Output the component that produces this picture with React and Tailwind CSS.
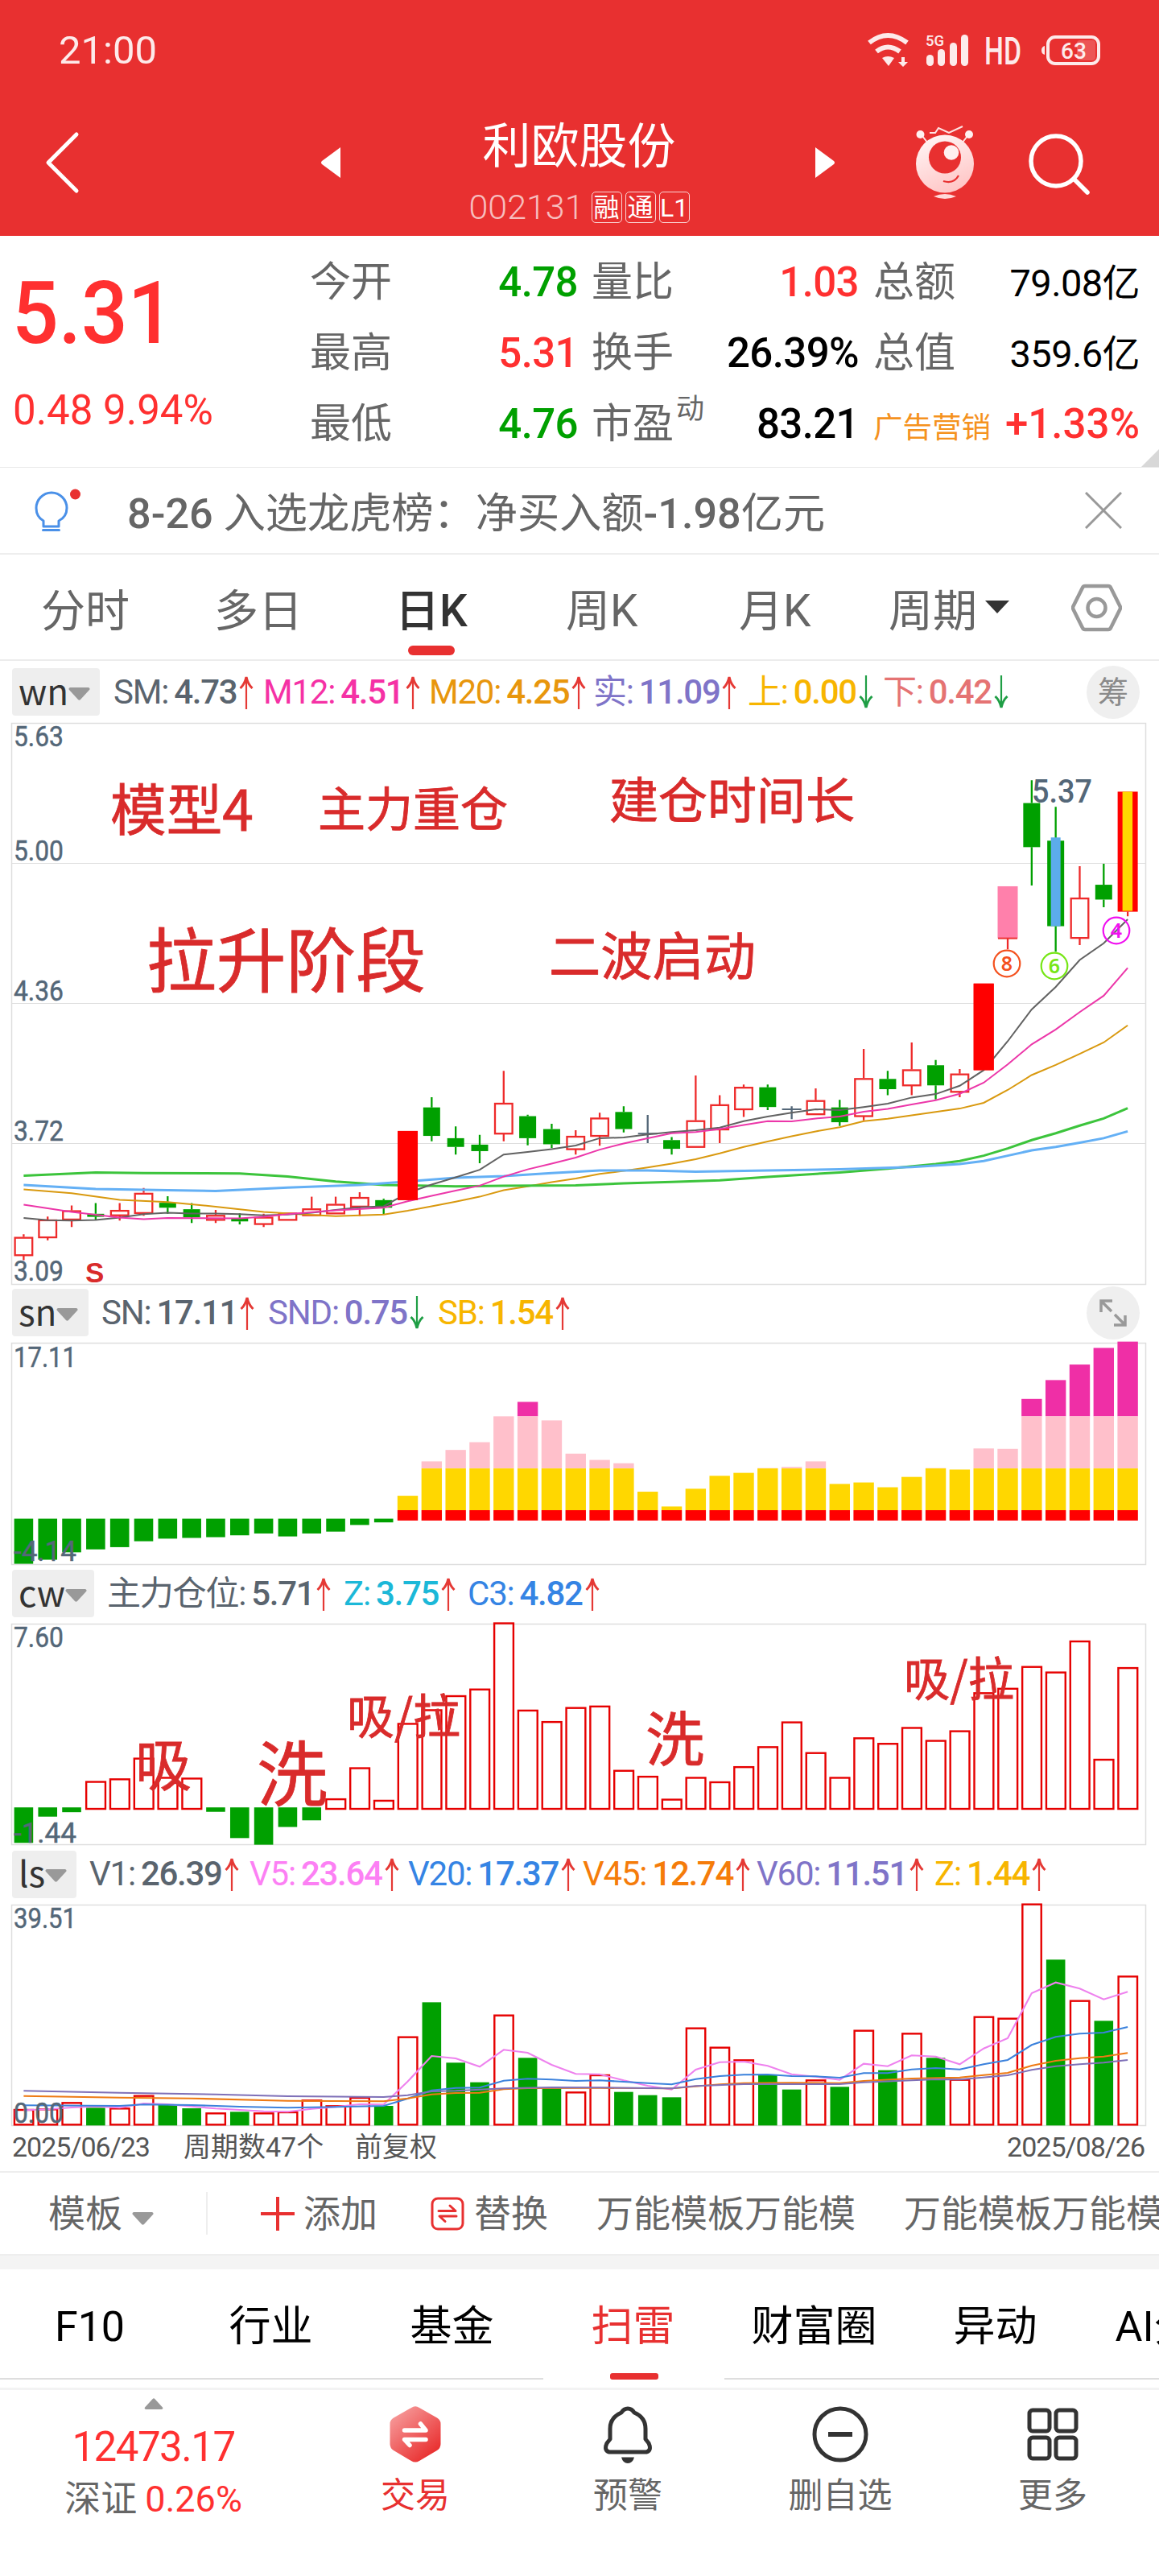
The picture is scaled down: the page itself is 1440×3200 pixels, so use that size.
import React from 'react';

// Shared geometry: 47 bars across the chart width
const STEP = 29.82;
const cx = (i) => 29.4 + i * STEP;

const RED = '#e60000';
const GREEN = '#00a000';
const FONT = 'Roboto, "Noto Sans CJK SC", sans-serif';

// [type, body top, body bottom, high, low] - r hollow, g green, R limit up, p pink, d doji, b blue core, y yellow core
const CANDLES = [
  ['r', 1391, 1439, 1384, 1452], ['r', 1345, 1392, 1337, 1400], ['r', 1321, 1345, 1308, 1365], ['g', 1330, 1338, 1302, 1347],
  ['r', 1320, 1334, 1302, 1348], ['r', 1275, 1328, 1262, 1335], ['g', 1301, 1314, 1284, 1330], ['g', 1318, 1339, 1302, 1354],
  ['r', 1333, 1346, 1320, 1354], ['g', 1341, 1350, 1329, 1358], ['r', 1338, 1357, 1330, 1365], ['r', 1327, 1346, 1327, 1346],
  ['r', 1316, 1334, 1285, 1334], ['r', 1304, 1329, 1285, 1329], ['r', 1286, 1311, 1273, 1336], ['g', 1294, 1314, 1290, 1331],
  ['R', 1112, 1294, 1112, 1294], ['g', 1050, 1125, 1023, 1139], ['g', 1131, 1154, 1100, 1174], ['g', 1148, 1165, 1122, 1197],
  ['r', 1038, 1119, 954, 1139], ['g', 1073, 1131, 1069, 1150], ['g', 1107, 1147, 1093, 1157], ['r', 1125, 1160, 1110, 1174],
  ['r', 1077, 1125, 1064, 1151], ['g', 1062, 1107, 1047, 1116], ['d', 1119, 1119, 1070, 1144], ['g', 1136, 1159, 1128, 1174],
  ['r', 1084, 1154, 966, 1154], ['r', 1042, 1108, 1018, 1144], ['r', 996, 1055, 990, 1075], ['g', 997, 1049, 990, 1057],
  ['d', 1055, 1055, 1047, 1081], ['r', 1031, 1068, 1000, 1068], ['g', 1050, 1089, 1030, 1099], ['r', 973, 1073, 896, 1084],
  ['g', 975, 1002, 954, 1018], ['r', 950, 992, 879, 1018], ['g', 939, 992, 925, 1029], ['r', 961, 1009, 949, 1023],
  ['R', 724, 952, 724, 952], ['p', 468, 605, 468, 634], ['g', 249, 365, 189, 466], ['b', 348, 573, 259, 640],
  ['r', 498, 604, 415, 623], ['g', 464, 503, 409, 523], ['y', 219, 535, 219, 547],
];

// [bar index, value] points of the moving averages
const MA = [
  { color: '#d9990f', w: 2, pts: [[0, 1266], [2, 1276], [4, 1293], [6, 1299], [8, 1311], [10, 1325], [12, 1333], [13, 1336], [15, 1332], [16, 1322], [17, 1310], [18, 1298], [19, 1285], [20, 1268], [21, 1258], [22, 1247], [23, 1237], [24, 1225], [25, 1217], [26, 1208], [27, 1198], [28, 1186], [29, 1171], [30, 1154], [31, 1140], [32, 1126], [33, 1113], [34, 1102], [35, 1086], [36, 1080], [37, 1071], [38, 1062], [39, 1053], [40, 1038], [41, 1004], [42, 965], [43, 938], [44, 909], [45, 879], [46, 834]] },
  { color: '#3cc43c', w: 3, pts: [[0, 1230], [3, 1221], [5, 1223], [9, 1224], [11, 1232], [13, 1245], [15, 1254], [16, 1255], [18, 1258], [20, 1256], [23, 1255], [25, 1250], [27, 1246], [29, 1242], [31, 1233], [34, 1221], [36, 1211], [38, 1199], [39, 1191], [40, 1177], [41, 1158], [42, 1136], [43, 1118], [44, 1098], [45, 1079], [46, 1052]] },
  { color: '#64b0f5', w: 3, pts: [[0, 1254], [3, 1265], [6, 1268], [8, 1270], [11, 1261], [14, 1254], [16, 1245], [18, 1235], [20, 1231], [22, 1223], [24, 1216], [26, 1216], [28, 1219], [31, 1216], [34, 1213], [37, 1207], [39, 1199], [40, 1191], [41, 1177], [42, 1163], [43, 1154], [44, 1143], [45, 1131], [46, 1113]] },
  { color: '#626262', w: 2, pts: [[0, 1341], [1, 1347], [2, 1348], [3, 1346], [4, 1340], [5, 1331], [6, 1327], [7, 1329], [8, 1329], [9, 1331], [10, 1334], [11, 1332], [12, 1327], [13, 1320], [14, 1313], [15, 1310], [16, 1275], [17, 1253], [18, 1234], [19, 1214], [20, 1174], [21, 1167], [22, 1160], [23, 1150], [24, 1131], [25, 1129], [26, 1121], [27, 1115], [28, 1110], [29, 1103], [30, 1086], [31, 1074], [32, 1064], [33, 1055], [34, 1057], [35, 1049], [36, 1040], [37, 1024], [38, 1015], [39, 993], [40, 952], [41, 876], [42, 792], [43, 733], [44, 662], [45, 618], [46, 555]] },
  { color: '#ec37a9', w: 2, pts: [[0, 1306], [2, 1325], [4, 1340], [5, 1344], [6, 1341], [9, 1342], [10, 1338], [11, 1331], [13, 1321], [15, 1314], [16, 1297], [17, 1283], [18, 1269], [19, 1256], [20, 1232], [21, 1213], [22, 1198], [23, 1182], [24, 1161], [25, 1145], [26, 1131], [27, 1118], [28, 1115], [29, 1107], [30, 1096], [31, 1086], [32, 1087], [33, 1079], [34, 1074], [35, 1061], [36, 1054], [37, 1042], [38, 1031], [39, 1014], [40, 985], [41, 937], [42, 884], [43, 845], [44, 799], [45, 756], [46, 683]] },
];

const SN_NEG = [769, 758, 738, 730, 724, 708, 701, 699, 697, 692, 687, 695, 687, 682, 664, 657];
const SN_POS = [585, 492, 461, 440, 370, 331, 381, 471, 488, 497, 574, 614, 566, 531, 523, 510, 507, 492, 553, 549, 562, 534, 510, 514, 457, 458, 323, 272, 230, 185, 168];

const CW = [1523, 1452, 1440, 1358, 1351, 1295, 1347, 1349, 1439, 1510, 1528, 1480, 1462, 1405, 1321, 1409, 1201, 1164, 1126, 1108, 929, 1165, 1196, 1158, 1154, 1328, 1344, 1406, 1347, 1359, 1318, 1264, 1197, 1280, 1347, 1240, 1255, 1212, 1247, 1221, 1118, 1106, 1047, 1062, 978, 1298, 1050];

const LS = [
  ['r', 992], ['r', 990], ['r', 966], ['g', 984], ['r', 987], ['r', 940], ['g', 972], ['g', 986], ['r', 1005], ['g', 999], ['r', 1005], ['r', 1001],
  ['r', 957], ['r', 978], ['r', 947], ['g', 977], ['r', 721], ['g', 591], ['g', 816], ['g', 889], ['r', 640], ['g', 798], ['g', 912], ['r', 927],
  ['r', 863], ['g', 925], ['g', 937], ['g', 945], ['r', 688], ['r', 760], ['r', 807], ['g', 860], ['g', 916], ['r', 882], ['g', 906], ['r', 697],
  ['g', 844], ['r', 708], ['g', 798], ['r', 880], ['r', 646], ['r', 652], ['r', 226], ['g', 432], ['r', 586], ['g', 660], ['r', 495],
];

const LS_LINES = [
  { color: '#ee82ee', pts: [[0, 993], [1, 990], [2, 983], [3, 979], [4, 984], [5, 968], [6, 971], [7, 979], [8, 987], [9, 992], [10, 997], [11, 999], [12, 988], [13, 981], [14, 971], [15, 972], [16, 886], [17, 791], [18, 800], [19, 831], [20, 768], [21, 779], [22, 824], [23, 858], [24, 859], [25, 882], [26, 902], [27, 916], [28, 842], [29, 814], [30, 812], [31, 828], [32, 859], [33, 868], [34, 880], [35, 820], [36, 829], [37, 789], [38, 793], [39, 822], [40, 763], [41, 725], [42, 557], [43, 517], [44, 540], [45, 580], [46, 552]] },
  { color: '#3c82dc', pts: [[0, 975], [4, 977], [5, 972], [7, 974], [9, 980], [11, 984], [13, 981], [15, 977], [16, 950], [17, 919], [18, 910], [19, 909], [20, 883], [21, 876], [22, 879], [23, 884], [24, 882], [25, 887], [26, 892], [27, 897], [28, 877], [29, 866], [30, 861], [31, 860], [32, 866], [33, 867], [34, 872], [35, 855], [36, 855], [37, 841], [38, 836], [39, 841], [40, 822], [41, 806], [42, 750], [43, 720], [44, 708], [45, 704], [46, 683]] },
  { color: '#ee7a14', pts: [[0, 940], [4, 946], [7, 949], [11, 958], [15, 960], [16, 949], [17, 934], [18, 929], [19, 928], [20, 915], [21, 911], [24, 910], [27, 912], [28, 904], [29, 897], [30, 892], [32, 891], [34, 892], [35, 884], [37, 875], [39, 871], [40, 862], [41, 854], [42, 827], [43, 809], [44, 799], [45, 793], [46, 780]] },
  { color: '#7f70b8', pts: [[0, 921], [4, 928], [8, 934], [11, 941], [15, 944], [16, 937], [17, 923], [18, 921], [20, 912], [22, 908], [24, 909], [27, 912], [28, 903], [30, 896], [34, 896], [35, 889], [37, 882], [38, 878], [39, 879], [41, 863], [42, 843], [43, 829], [44, 822], [45, 816], [46, 806]] },
];

const line = (pts, y) => pts.map(([i, v]) => `${cx(i).toFixed(1)},${y(v).toFixed(1)}`).join(' ');

const Frame = ({ h }) => <rect x="14.5" y="0.5" width="1409" height={h - 1} fill="none" stroke="#dedede" strokeWidth="1.5" />;

const Axis = ({ y, w = 62, children }) => (
  <text x="17" y={y} fontSize="35" fill="#546778" stroke="#546778" strokeWidth="0.5" fontFamily={FONT} textLength={w} lengthAdjust="spacingAndGlyphs">{children}</text>
);

const Note = ({ x, y, size, w, children }) => (
  <text x={x} y={y} fontSize={size} fill="#d92b2b" stroke="#d92b2b" strokeWidth="0.8" fontFamily='"Noto Sans CJK SC", sans-serif' textLength={w} lengthAdjust="spacingAndGlyphs">{children}</text>
);

const Candle = ({ i, c }) => {
  const y = (v) => (v - 38) * 0.472;
  const [type, top, bottom, high, low] = c;
  const x = cx(i);
  const h = (bottom - top) * 0.472;
  const wick = type === 'd' ? '#546778' : type === 'g' || type === 'b' ? GREEN : '#ee2a2a';
  return (
    <g>
      <path d={`M${x} ${y(high)}V${y(top)}M${x} ${y(bottom)}V${y(low)}`} stroke={wick} strokeWidth="2.3" />
      {type === 'r' && <rect x={x - 10.8} y={y(top) + 1} width="21.6" height={Math.max(h - 1, 3)} fill="none" stroke="#ee2a2a" strokeWidth="2.3" />}
      {(type === 'g' || type === 'b') && <rect x={x - 10.5} y={y(top)} width="21" height={h} fill={GREEN} />}
      {(type === 'R' || type === 'y') && <rect x={x - 12.5} y={y(top)} width="25" height={h} fill="#ff0000" />}
      {type === 'p' && <rect x={x - 12.5} y={y(top)} width="25" height={h} fill="#ff80ab" />}
      {type === 'p' && <path d={`M${x - 12} ${y(bottom)}h24`} stroke="#ee3333" strokeWidth="2" />}
      {type === 'b' && <rect x={x - 6} y={y(top) - 4} width="12" height={h + 4} fill="#5caceb" />}
      {type === 'y' && <rect x={x - 6.5} y={y(top)} width="12.5" height={h - 1} fill="#ffd700" />}
      {type === 'd' && <path d={`M${x - 12} ${y(top)}h24`} stroke="#546778" strokeWidth="2" />}
    </g>
  );
};

const Marker = ({ x, y, color, children }) => (
  <g>
    <circle cx={x} cy={y} r="16.3" fill="none" stroke={color} strokeWidth="2.2" />
    <text x={x} y={y + 9} fontSize="25" fontWeight="600" textAnchor="middle" fill={color} fontFamily='"Noto Sans", sans-serif'>{children}</text>
  </g>
);

const KChart = () => {
  const y = (v) => (v - 38) * 0.472;
  return (
    <svg className="block overflow-visible" width="1440" height="698">
      <Frame h={698} />
      {[174.5, 348.5, 522.5].map((g) => <path key={g} d={`M14 ${g}H1424`} stroke="#dedede" />)}
      <Axis y={29}>5.63</Axis>
      <Axis y={170.5}>5.00</Axis>
      <Axis y={344.5}>4.36</Axis>
      <Axis y={519}>3.72</Axis>
      <Axis y={693}>3.09</Axis>
      {CANDLES.map((c, i) => <Candle key={i} i={i} c={c} />)}
      {MA.map((m) => <polyline key={m.color} points={line(m.pts, y)} fill="none" stroke={m.color} strokeWidth={m.w} />)}
      {/* limit-up bars stay above the averages */}
      {[16, 40].map((i) => <Candle key={i} i={i} c={CANDLES[i]} />)}
      <text x="1282" y="98.5" fontSize="41" fontWeight="500" fill="#546778" fontFamily={FONT} textLength="75" lengthAdjust="spacingAndGlyphs">5.37</text>
      <Marker x={1251} y={299} color="#f4511e">8</Marker>
      <Marker x={1310} y={302} color="#76e615">6</Marker>
      <Marker x={1387} y={258} color="#f010f0">4</Marker>
      <text x="106" y="695" fontSize="35" fontWeight="700" fill="#d92b2b" fontFamily='"Liberation Sans", sans-serif'>S</text>
      <Note x={137} y={134} size={69} w={178}>模型4</Note>
      <Note x={395} y={129} size={59} w={236}>主力重仓</Note>
      <Note x={757} y={119} size={61} w={305}>建仓时间长</Note>
      <Note x={182} y={328} size={87} w={347}>拉升阶段</Note>
      <Note x={682} y={313} size={64} w={257}>二波启动</Note>
    </svg>
  );
};

const SnChart = () => {
  const y = (v) => (v - 171) / 2.1778;
  const seg = (i, from, to, color) => <rect key={color} x={cx(i) - 12.7} y={y(from)} width="25.4" height={y(to) - y(from)} fill={color} />;
  return (
    <svg className="block overflow-visible" width="1440" height="276">
      <Frame h={276} />
      {SN_NEG.map((v, i) => <rect key={i} x={cx(i) - 11.8} y={y(647)} width="23.6" height={y(v) - y(647)} fill={GREEN} />)}
      {SN_POS.map((v, k) => {
        const i = k + 16;
        return (
          <g key={i}>
            {v < 370 && seg(i, v, 370, '#ef2fa6')}
            {v < 511 && seg(i, Math.max(v, 370), 511, '#ffc0cb')}
            {seg(i, Math.max(v, 511), 624, '#ffd700')}
            {seg(i, 624, 652, '#ff0000')}
          </g>
        );
      })}
      <Axis y={29.5} w={78}>17.11</Axis>
      <Axis y={271} w={78}>-4.14</Axis>
    </svg>
  );
};

const CwChart = () => {
  const y = (v) => (v - 930) / 2.1778;
  return (
    <svg className="block overflow-visible" width="1440" height="275">
      <Frame h={275} />
      {CW.map((v, i) =>
        v > 1427 ? (
          <rect key={i} x={cx(i) - 11.8} y={y(1427)} width="23.6" height={y(v) - y(1427)} fill={GREEN} />
        ) : (
          <rect key={i} x={cx(i) - 11.7} y={y(v)} width="23.8" height={y(1431) - y(v)} fill="none" stroke={RED} strokeWidth="2.4" />
        )
      )}
      <Axis y={29}>7.60</Axis>
      <Axis y={272} w={78}>-1.44</Axis>
      <Note x={168} y={202} size={70}>吸</Note>
      <Note x={319} y={219} size={88}>洗</Note>
      <Note x={431} y={137} size={59} w={141}>吸/拉</Note>
      <Note x={802} y={170} size={73}>洗</Note>
      <Note x={1123} y={90} size={58} w={137}>吸/拉</Note>
    </svg>
  );
};

const LsChart = () => {
  const y = (v) => (v - 227) / 3;
  return (
    <svg className="block overflow-visible" width="1440" height="275">
      <Frame h={275} />
      {LS.map(([t, v], i) =>
        t === 'g' ? (
          <rect key={i} x={cx(i) - 11.8} y={y(v)} width="23.6" height={y(1050) - y(v)} fill={GREEN} />
        ) : (
          <rect key={i} x={cx(i) - 11.5} y={y(v)} width="23.4" height={y(1047) - y(v)} fill="none" stroke={RED} strokeWidth="2.4" />
        )
      )}
      {LS_LINES.map((m) => <polyline key={m.color} points={line(m.pts, y)} fill="none" stroke={m.color} strokeWidth="2.1" />)}
      <Axis y={29} w={78}>39.51</Axis>
      <Axis y={271}>0.00</Axis>
    </svg>
  );
};

const Arrow = ({ down }) => (
  <svg className={down ? 'shrink-0 rotate-180' : 'shrink-0'} width="18" height="42" viewBox="0 0 18 42" fill="none" stroke={down ? '#1f9e45' : '#e53935'}>
    <path d="M9 2V42" strokeWidth="2.2" />
    <path d="M1.5 16Q7 11 9 2Q11 11 16.5 16" strokeWidth="3" />
  </svg>
);

const Caret = ({ className, w = 27, h = 16 }) => (
  <svg className={'shrink-0 ' + className} width={w} height={h} viewBox="0 0 27 16" fill="currentColor">
    <path d="M2 0H25Q27.500 1 26 3L15 15Q13.500 16.500 12 15L1 3Q-0.500 1 2 0Z" />
  </svg>
);

const Badge = ({ className, children }) => (
  <div className={'flex h-[59px] shrink-0 items-center rounded-[4px] bg-[#eeeeee] pl-[8px] text-[44px] text-[#333333] ' + className}>
    <span className="relative top-[-3px] font-['Noto_Sans_CJK_SC']">{children}</span>
    <Caret className="mt-1 text-[#999999]" />
  </div>
);

const Stat = ({ className, label, value, down }) => (
  <div className={'flex shrink-0 items-center whitespace-nowrap ' + className}>
    <span className="tracking-[-1.2px]">{label}:</span>
    <span className="ml-[7px] font-medium tracking-[-1.3px]">{value}</span>
    <span className="ml-[3px] flex"><Arrow down={down} /></span>
  </div>
);

const IndicatorRow = ({ className, children }) => (
  <div className={'flex items-center pl-[15px] text-[42px] leading-none ' + className}>{children}</div>
);

const RoundButton = ({ children }) => (
  <div className="mr-[24px] ml-auto flex size-[66px] items-center justify-center rounded-full bg-[#efefef] text-[38px] text-[#8a8a8a]">{children}</div>
);

const StatusBar = () => (
  <div className="flex h-[124px] items-center pl-[73px] text-white/90">
    <span className="text-[49px] leading-none">21:00</span>
    <svg className="mt-px ml-auto" width="362" height="60" viewBox="1078 32 362 60" fill="currentColor">
      <g fill="none" stroke="currentColor" strokeWidth="6">
        <path d="M1080 52Q1103 34 1127 52" />
        <path d="M1089 63Q1103 52 1118 63" />
      </g>
      <path d="M1096 71Q1103 67 1111 71L1104 81ZM1120 70h4v6h4l-6 6-6-6h4Z" />
      <text x="1150" y="56" fontSize="19" fontWeight="500" fontFamily="Roboto, sans-serif" textLength="23" lengthAdjust="spacingAndGlyphs">5G</text>
      <rect x="1151" y="67" width="9" height="14" rx="4.500" />
      <rect x="1165" y="60" width="9" height="21" rx="4.500" />
      <rect x="1180" y="52" width="9" height="29" rx="4.500" />
      <rect x="1194" y="42" width="9" height="39" rx="4.500" />
      <text x="1223" y="79" fontSize="48" fontWeight="500" fontFamily="Roboto, sans-serif" textLength="46" lengthAdjust="spacingAndGlyphs">HD</text>
      <path d="M1298 56v11q-4-1-4-5.500t4-5.500Z" />
      <rect x="1302" y="45" width="63" height="33" rx="9" fill="none" stroke="currentColor" strokeWidth="4" />
      <rect x="1338" y="49" width="23" height="25" rx="4" opacity="0.200" />
      <text x="1334" y="72" fontSize="28" fontWeight="500" textAnchor="middle" fontFamily="Roboto, sans-serif">63</text>
    </svg>
  </div>
);

const Robot = () => (
  <svg width="74" height="94" viewBox="1137 155 74 94">
    <defs>
      <linearGradient id="bot" x1="0.3" y1="0" x2="0.7" y2="1">
        <stop offset="0" stopColor="#fff4f4" />
        <stop offset="1" stopColor="#ffc4c4" />
      </linearGradient>
    </defs>
    <path d="M1146 169l7 9M1202 169l-7 9M1155 165h7l4-6 13 6 17-8" fill="none" stroke="#ffe3e3" strokeWidth="2" />
    <circle cx="1143.500" cy="167" r="5" fill="#fff0f0" />
    <circle cx="1204" cy="167" r="5" fill="#fff0f0" />
    <circle cx="1174" cy="203.500" r="36" fill="url(#bot)" />
    <circle cx="1174" cy="195.500" r="20" fill="#e83030" />
    <circle cx="1182" cy="189.500" r="9.300" fill="#fff0f0" />
    <path d="M1172 225q13 4 19-7" fill="none" stroke="#e83030" strokeWidth="2.200" />
    <path d="M1160 244q14-6 28 0q-14 6-28 0Z" fill="#ffd9d9" />
  </svg>
);

const Tag = ({ children }) => (
  <span className="flex h-[39px] w-[38px] items-center justify-center rounded-[5px] border-[1.5px] border-white/80 text-[32px] leading-none text-white">{children}</span>
);

const Header = () => (
  <header className="h-[293px] bg-[#e83030] text-white">
    <StatusBar />
    <div className="flex h-[169px] items-start">
      <svg className="mt-[39px] ml-[54px]" width="46" height="78" viewBox="0 0 46 78" fill="none" stroke="#fff" strokeWidth="5" strokeLinecap="round" strokeLinejoin="round"><path d="M41 4L6 39L41 74" /></svg>
      <svg className="mt-[59px] ml-[299px]" width="24" height="38" fill="#fff"><path d="M24 0V38L1 21Q-1 19 1 17Z" /></svg>
      <div className="flex w-[590px] flex-col items-center pl-[3px]">
        <h1 className="mt-[27px] text-[60px] leading-[64px]">利欧股份</h1>
        <div className="mt-[21px] flex items-center gap-[4px] leading-none">
          <span className="mr-[5px] text-[43px] font-light text-white/70">002131</span>
          <Tag>融</Tag>
          <Tag>通</Tag>
          <Tag>L1</Tag>
        </div>
      </div>
      <svg className="mt-[59px]" width="24" height="38" fill="#fff"><path d="M0 0V38L23 21Q25 19 23 17Z" /></svg>
      <div className="mt-[31px] ml-[100px]"><Robot /></div>
      <svg className="mt-[34px] ml-[64px]" width="84" height="84" viewBox="0 0 84 84" fill="none" stroke="#fff" strokeWidth="5.500" strokeLinecap="round"><circle cx="37" cy="42" r="31" /><path d="M60 65L76 81" /></svg>
    </div>
  </header>
);

const Row = ({ label, value, color, className }) => (
  <div className={'flex h-[88px] items-center justify-between ' + className}>
    <span className="text-[#666666]">{label}</span>
    <span className={'font-medium tracking-[-0.6px] ' + color}>{value}</span>
  </div>
);

const Quote = () => (
  <section className="relative flex h-[288px] border-b-[1.500px] border-[#e8e8e8] pt-[13px] text-[51px] leading-none whitespace-nowrap">
    <div className="w-[385px] text-[#ff3030]">
      <div className="ml-[15px] h-[152px] origin-left scale-x-[0.95] pt-[30px] text-[107px] font-medium">5.31</div>
      <div className="ml-[16px] pt-[26px] text-[51px]">0.48 9.94%</div>
    </div>
    <div className="w-[333px]">
      <Row label="今开" value="4.78" color="text-[#00a000]" />
      <Row label="最高" value="5.31" color="text-[#ff3030]" />
      <Row label="最低" value="4.76" color="text-[#00a000]" />
    </div>
    <div className="ml-[17px] w-[332px]">
      <Row label="量比" value="1.03" color="text-[#ff3030]" />
      <Row label="换手" value="26.39%" color="text-black" />
      <Row label={<>市盈<sup className="relative top-[-24px] ml-[3px] align-baseline text-[35px]">动</sup></>} value="83.21" color="text-black" />
    </div>
    <div className="ml-[18px] w-[331px]">
      <Row label="总额" value={<span className="text-[47px]">79.08亿</span>} color="text-black !font-normal" />
      <Row label="总值" value={<span className="text-[47px]">359.6亿</span>} color="text-black !font-normal" />
      <Row label={<span className="text-[36.5px] text-[#f5921e]">广告营销</span>} value="+1.33%" color="text-[#ff3030] !tracking-normal" />
    </div>
    <svg className="absolute right-0 bottom-0" width="22" height="22"><path d="M22 0V22H0Z" fill="#d8d8d8" /></svg>
  </section>
);

const Notice = () => (
  <section className="flex h-[108px] items-center border-b-[2px] border-[#eeeeee] pl-[42px] leading-none">
    <svg className="shrink-0" width="60" height="60" viewBox="42 603 60 60" fill="none" stroke="#4a90e8" strokeWidth="3">
      <path d="M54 653V646Q45 641 45 630A18.500 18.500 0 0 1 83 630Q83 641 73 646V653ZM53.500 657.500H73.500" strokeLinejoin="round" strokeLinecap="round" />
      <circle cx="93.500" cy="613" r="6.500" fill="#e83030" stroke="none" />
    </svg>
    <span className="mt-[11px] ml-[56px] text-[52.2px] text-[#666666]"><b className="font-medium">8-26</b> 入选龙虎榜：净买入额<b className="font-medium">-1.98</b>亿元</span>
    <svg className="mr-[46px] ml-auto" width="46" height="46" stroke="#999" strokeWidth="3"><path d="M1 1L45 45M45 1L1 45" /></svg>
  </section>
);

const PeriodTabs = () => (
  <nav className="flex h-[132px] items-center border-b-[2px] border-[#ececec] pt-[11px] text-[55px] leading-none whitespace-nowrap text-[#666666]">
    <span className="ml-[51px] w-[215px]">分时</span>
    <span className="w-[225px]">多日</span>
    <span className="relative w-[212px] font-medium text-[#333333]">
      日K
      <i className="absolute top-[70px] left-[16px] h-[12px] w-[58px] rounded-full bg-[#e83030]" />
    </span>
    <span className="w-[215px]">周K</span>
    <span className="w-[186px]">月K</span>
    <span>周期</span>
    <svg className="mb-[12px] ml-[10px]" width="30" height="16" fill="#333"><path d="M0 0H30L15 16Z" /></svg>
    <svg className="mr-[46px] mb-[10px] ml-auto" width="63" height="60" viewBox="0 0 63 60" fill="none" stroke="#999" strokeWidth="4.500" strokeLinejoin="round">
      <path d="M17 3H46Q48 3 49 5L60.500 28Q61.500 30 60.500 32L49 55Q48 57 46 57H17Q15 57 14 55L2.500 32Q1.500 30 2.500 28L14 5Q15 3 17 3Z" />
      <circle cx="31.500" cy="30" r="11" />
    </svg>
  </nav>
);

const Toolbar = () => (
  <div className="flex h-[103px] items-center overflow-hidden border-t-[2px] border-[#eeeeee] text-[46px] leading-none whitespace-nowrap text-[#666666]">
    <span className="ml-[60px]">模板</span>
    <Caret className="mt-3 ml-[12px] text-[#999999]" />
    <i className="ml-[65px] h-[53px] w-[2px] shrink-0 bg-[#eeeeee]" />
    <svg className="ml-[66px] shrink-0" width="42" height="42" stroke="#e83030" strokeWidth="4"><path d="M0 21H42M21 0V42" /></svg>
    <span className="ml-[11px]">添加</span>
    <svg className="ml-[66px] shrink-0" width="42" height="42" viewBox="0 0 42 42" fill="none" stroke="#e83030" strokeWidth="3" strokeLinecap="round" strokeLinejoin="round">
      <rect x="2" y="2" width="38" height="38" rx="7" />
      <path d="M10 17.500H31L24 11M32 24H11L18 30.500" />
    </svg>
    <span className="ml-[12px]">替换</span>
    <span className="ml-[60px]">万能模板万能模</span>
    <span className="ml-[60px]">万能模板万能模</span>
  </div>
);

const InfoTabs = () => (
  <nav className="flex h-[137px] w-[1440px] overflow-hidden text-[52px] leading-none whitespace-nowrap text-black">
    {['F10', '行业', '基金', '扫雷', '财富圈', '异动', 'AI分析'].map((t) => (
      <span
        key={t}
        className={
          'relative flex w-[225px] shrink-0 justify-center pt-[46px] pr-[2px] ' +
          (t === '扫雷' ? 'text-[#e83030]' : 'border-b-[2px] border-[#dedede]')
        }
      >
        {t}
        {t === '扫雷' && <i className="absolute bottom-0 left-[83px] h-[8px] w-[60px] rounded-[3px] bg-[#e83030]" />}
      </span>
    ))}
  </nav>
);

const NavItem = ({ label, className, children }) => (
  <div className={'flex w-[264px] flex-col items-center text-[43px] leading-none ' + className}>
    <svg className="mt-[17px]" width="76" height="76" viewBox="0 0 76 76" fill="none" stroke="#333" strokeWidth="5" strokeLinecap="round" strokeLinejoin="round">{children}</svg>
    <span className="mt-[17px]">{label}</span>
  </div>
);

const BottomNav = () => (
  <footer className="flex h-[234px] border-t-[3px] border-[#f3f3f3] text-[#666666]">
    <div className="flex w-[384px] flex-col items-center pr-[3px] leading-none whitespace-nowrap text-[#ff3030]">
      <Caret className="mt-[10px] rotate-180 text-[#999999]" w={24} h={14} />
      <span className="mt-[21px] text-[51px] tracking-[-1.500px]">12473.17</span>
      <span className="mt-[17px] flex gap-[10px] text-[45px]"><span className="text-[#666666]">深证</span>0.26%</span>
    </div>
    <NavItem label="交易" className="text-[#e83030]">
      <defs>
        <linearGradient id="hex" x1="0" y1="0" x2="0.8" y2="1">
          <stop offset="0" stopColor="#f8a8a8" />
          <stop offset="1" stopColor="#e82828" />
        </linearGradient>
      </defs>
      <path d="M33 5Q38 1.500 43 5L65 17.500Q69.500 20 69.500 25V50Q69.500 55 65 58L43 71Q38 74 33 71L11 58Q6.500 55 6.500 50V25Q6.500 20 11 17.500Z" fill="url(#hex)" stroke="none" />
      <path d="M24.500 33H51L44.500 25M51 44.500H24.500L31 51.500" stroke="#fff" strokeWidth="5.500" />
    </NavItem>
    <NavItem label="预警">
      <path d="M38 6Q33 6 30 11Q16 17 16 31V44L12 49Q8 58 15 60H61Q68 58 64 49L60 44V31Q60 17 46 11Q43 6 38 6Z" />
      <path d="M30 66.500H46Q44 74 38 74Q32 74 30 66.500Z" fill="#333" stroke="none" />
    </NavItem>
    <NavItem label="删自选">
      <circle cx="38" cy="38" r="32" />
      <path d="M23 38H53" strokeWidth="6" strokeLinecap="butt" />
    </NavItem>
    <NavItem label="更多">
      <rect x="9" y="8" width="25" height="26" rx="4" />
      <rect x="42" y="8" width="25" height="26" rx="4" />
      <rect x="9" y="42" width="25" height="26" rx="4" />
      <rect x="42" y="42" width="25" height="26" rx="4" />
    </NavItem>
  </footer>
);

export default function App() {
  return (
    <div className="h-[3200px] w-[1440px] overflow-hidden bg-white font-[Roboto,'Noto_Sans_CJK_SC',sans-serif]">
      <Header />
      <Quote />
      <Notice />
      <PeriodTabs />
      <IndicatorRow className="h-[77px]">
        <Badge className="w-[109px]">wn</Badge>
        <Stat className="ml-[17px] w-[186px] text-[#5a646e]" label="SM" value="4.73" />
        <Stat className="w-[206px] text-[#f531a5]" label="M12" value="4.51" />
        <Stat className="w-[204px] text-[#e8960c]" label="M20" value="4.25" />
        <Stat className="w-[192px] text-[#7f74c8]" label="实" value="11.09" />
        <Stat className="w-[168px] text-[#f7b500]" label="上" value="0.00" down />
        <Stat className="text-[#e57373]" label="下" value="0.42" down />
        <RoundButton>筹</RoundButton>
      </IndicatorRow>
      <KChart />
      <IndicatorRow className="h-[72px] pb-[3px]">
        <Badge className="w-[95px]">sn</Badge>
        <Stat className="ml-[16px] w-[207px] text-[#5a646e]" label="SN" value="17.11" />
        <Stat className="w-[211px] text-[#7f74c8]" label="SND" value="0.75" down />
        <Stat className="text-[#f7b500]" label="SB" value="1.54" />
        <RoundButton>
          <svg width="34" height="34" viewBox="0 0 34 34" fill="none" stroke="#999" strokeWidth="3.500"><path d="M2 16V2H16M3 3L15 15M32 20V32H18M31 31L19 19" /></svg>
        </RoundButton>
      </IndicatorRow>
      <SnChart />
      <IndicatorRow className="h-[73px] pb-[2px]">
        <Badge className="w-[102px]">cw</Badge>
        <Stat className="ml-[16px] w-[294px] text-[#5a646e]" label="主力仓位" value="5.71" />
        <Stat className="w-[154px] text-[#1cb8d8]" label="Z" value="3.75" />
        <Stat className="text-[#3584e4]" label="C3" value="4.82" />
      </IndicatorRow>
      <CwChart />
      <IndicatorRow className="h-[74px] pb-[2px]">
        <Badge className="w-[80px]">ls</Badge>
        <Stat className="ml-[16px] w-[199px] text-[#5a646e]" label="V1" value="26.39" />
        <Stat className="w-[197px] text-[#fc80f4]" label="V5" value="23.64" />
        <Stat className="w-[217px] text-[#3584e4]" label="V20" value="17.37" />
        <Stat className="w-[216px] text-[#f57c0a]" label="V45" value="12.74" />
        <Stat className="w-[221px] text-[#7f74c8]" label="V60" value="11.51" />
        <Stat className="text-[#f7b500]" label="Z" value="1.44" />
      </IndicatorRow>
      <LsChart />
      <div className="flex h-[56px] items-center pr-[18px] pb-[4px] pl-[15px] text-[34px] leading-none text-[#555555]">
        <span className="w-[213px] tracking-[-1px]">2025/06/23</span>
        <span className="w-[213px]">周期数47个</span>
        <span>前复权</span>
        <span className="ml-auto tracking-[-1px]">2025/08/26</span>
      </div>
      <Toolbar />
      <div className="h-[19px] border-t-[2px] border-[#eeeeee] bg-[#f4f4f4]" />
      <InfoTabs />
      <div className="h-[10px]" />
      <BottomNav />
    </div>
  );
}
